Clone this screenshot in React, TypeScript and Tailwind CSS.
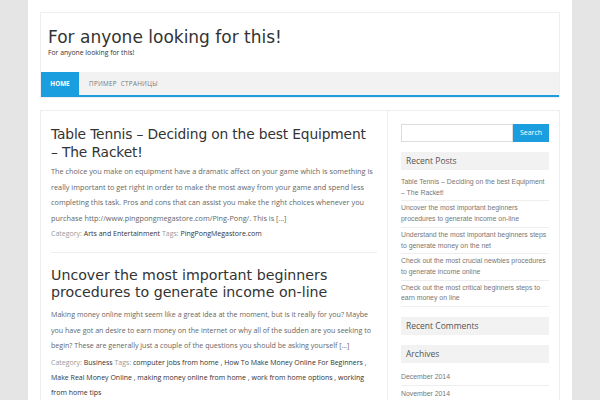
import type { ReactNode } from 'react';

const recentPosts = [
  'Table Tennis – Deciding on the best Equipment – The Racket!',
  'Uncover the most important beginners procedures to generate income on-line',
  'Understand the most important beginners steps to generate money on the net',
  'Check out the most crucial newbies procedures to generate income online',
  'Check out the most critical beginners steps to earn money on line',
];

function WidgetTitle({ children }: { children: ReactNode }) {
  return (
    <h3 className="flex h-[18px] items-center bg-[#f2f2f2] px-[5px] font-['Open_Sans',sans-serif] text-[8.5px] text-[#555]">
      {children}
    </h3>
  );
}

function Meta({ category, tags }: { category: string; tags: string[] }) {
  return (
    <p className="text-[7px] leading-[15px] text-[#333]">
      <span className="text-[#999]">Category: </span>
      {category}
      <span className="text-[#999]"> Tags: </span>
      {tags.join(' , ')}
    </p>
  );
}

export default function App() {
  return (
    <div className="flex h-[400px] justify-center overflow-hidden bg-[#e5e5e5] font-['Open_Sans',sans-serif]">
      <div className="w-[544px] bg-white px-[12px] pt-[12px]">
        <header className="border border-[#eee]">
          <div className="px-[7px] pt-[13px] pb-[15px]">
            <h1 className="font-['DejaVu_Sans',sans-serif] text-[17px] leading-[22px] text-[#333]">For anyone looking for this!</h1>
            <p className="text-[6.8px] leading-[9px] text-[#333]">For anyone looking for this!</p>
          </div>
          <nav className="flex h-[25px] border-b-2 border-[#1b9ee0] bg-[#f2f2f2] text-[6.3px]">
            <span className="flex w-[38px] items-center justify-center bg-[#1b9ee0] font-bold text-white">HOME</span>
            <span className="flex items-center px-[10px] tracking-[0.3px] text-[#777]">ПРИМЕР&nbsp; СТРАНИЦЫ</span>
          </nav>
        </header>

        <div className="mt-[12px] flex border border-[#eee]">
          <main className="w-[347px] border-r border-[#eee] px-[10px] pt-[14px]">
            <article className="border-b border-[#eee] pb-[11px]">
              <h2 className="font-['DejaVu_Sans',sans-serif] text-[13.8px] leading-[18px] tracking-[-0.15px] text-[#333]">
                Table Tennis – Deciding on the best Equipment <span className="whitespace-nowrap">– The</span> Racket!
              </h2>
              <p className="mt-[3px] text-[7.3px] leading-[15.5px] text-[#666]">
                The choice you make on equipment have a dramatic affect on your game which is something is really important to get right in order to make the most away from your game and spend less completing this task. Pros and cons that can assist you make the right choices whenever you purchase http://www.pingpongmegastore.com/Ping-Pong/. This is […]
              </p>
              <Meta category="Arts and Entertainment" tags={['PingPongMegastore.com']} />
            </article>
            <article className="pt-[14px]">
              <h2 className="font-['DejaVu_Sans',sans-serif] text-[14.2px] leading-[17px] text-[#333]">
                Uncover the most important beginners procedures to generate income on-line
              </h2>
              <p className="mt-[6px] text-[7.1px] leading-[15.5px] text-[#666]">
                Making money online might seem like a great idea at the moment, but is it really for you? Maybe you have got an desire to earn money on the internet or why all of the sudden are you seeking to begin? These are generally just a couple of the questions you should be asking yourself […]
              </p>
              <div className="mt-[1px]">
                <Meta
                  category="Business"
                  tags={[
                    'computer jobs from home',
                    'How To Make Money Online For Beginners',
                    'Make Real Money Online',
                    'making money online from home',
                    'work from home options',
                    'working from home tips',
                  ]}
                />
              </div>
            </article>
          </main>

          <aside className="flex-1 pt-[13px] pr-[10px] pl-[13px] font-['Liberation_Sans',sans-serif] text-[6.9px] text-[#777]">
            <div className="flex h-[18px]">
              <div className="flex-1 border border-[#ddd]" />
              <button className="w-[36px] bg-[#1b9ee0] font-['Open_Sans',sans-serif] text-[7px] text-white">Search</button>
            </div>
            <div className="mt-[10px]">
              <WidgetTitle>Recent Posts</WidgetTitle>
              <ul className="mt-[5px]">
                {recentPosts.map((p) => (
                  <li key={p} className="border-b border-[#eee] py-[2px] leading-[10.7px]">
                    {p}
                  </li>
                ))}
              </ul>
            </div>
            <div className="mt-[10px]">
              <WidgetTitle>Recent Comments</WidgetTitle>
            </div>
            <div className="mt-[10px]">
              <WidgetTitle>Archives</WidgetTitle>
              <ul className="mt-[6px]">
                <li className="border-b border-[#eee] py-[3px] leading-[10px]">December 2014</li>
                <li className="py-[3px] leading-[10px]">November 2014</li>
              </ul>
            </div>
          </aside>
        </div>
      </div>
    </div>
  );
}
